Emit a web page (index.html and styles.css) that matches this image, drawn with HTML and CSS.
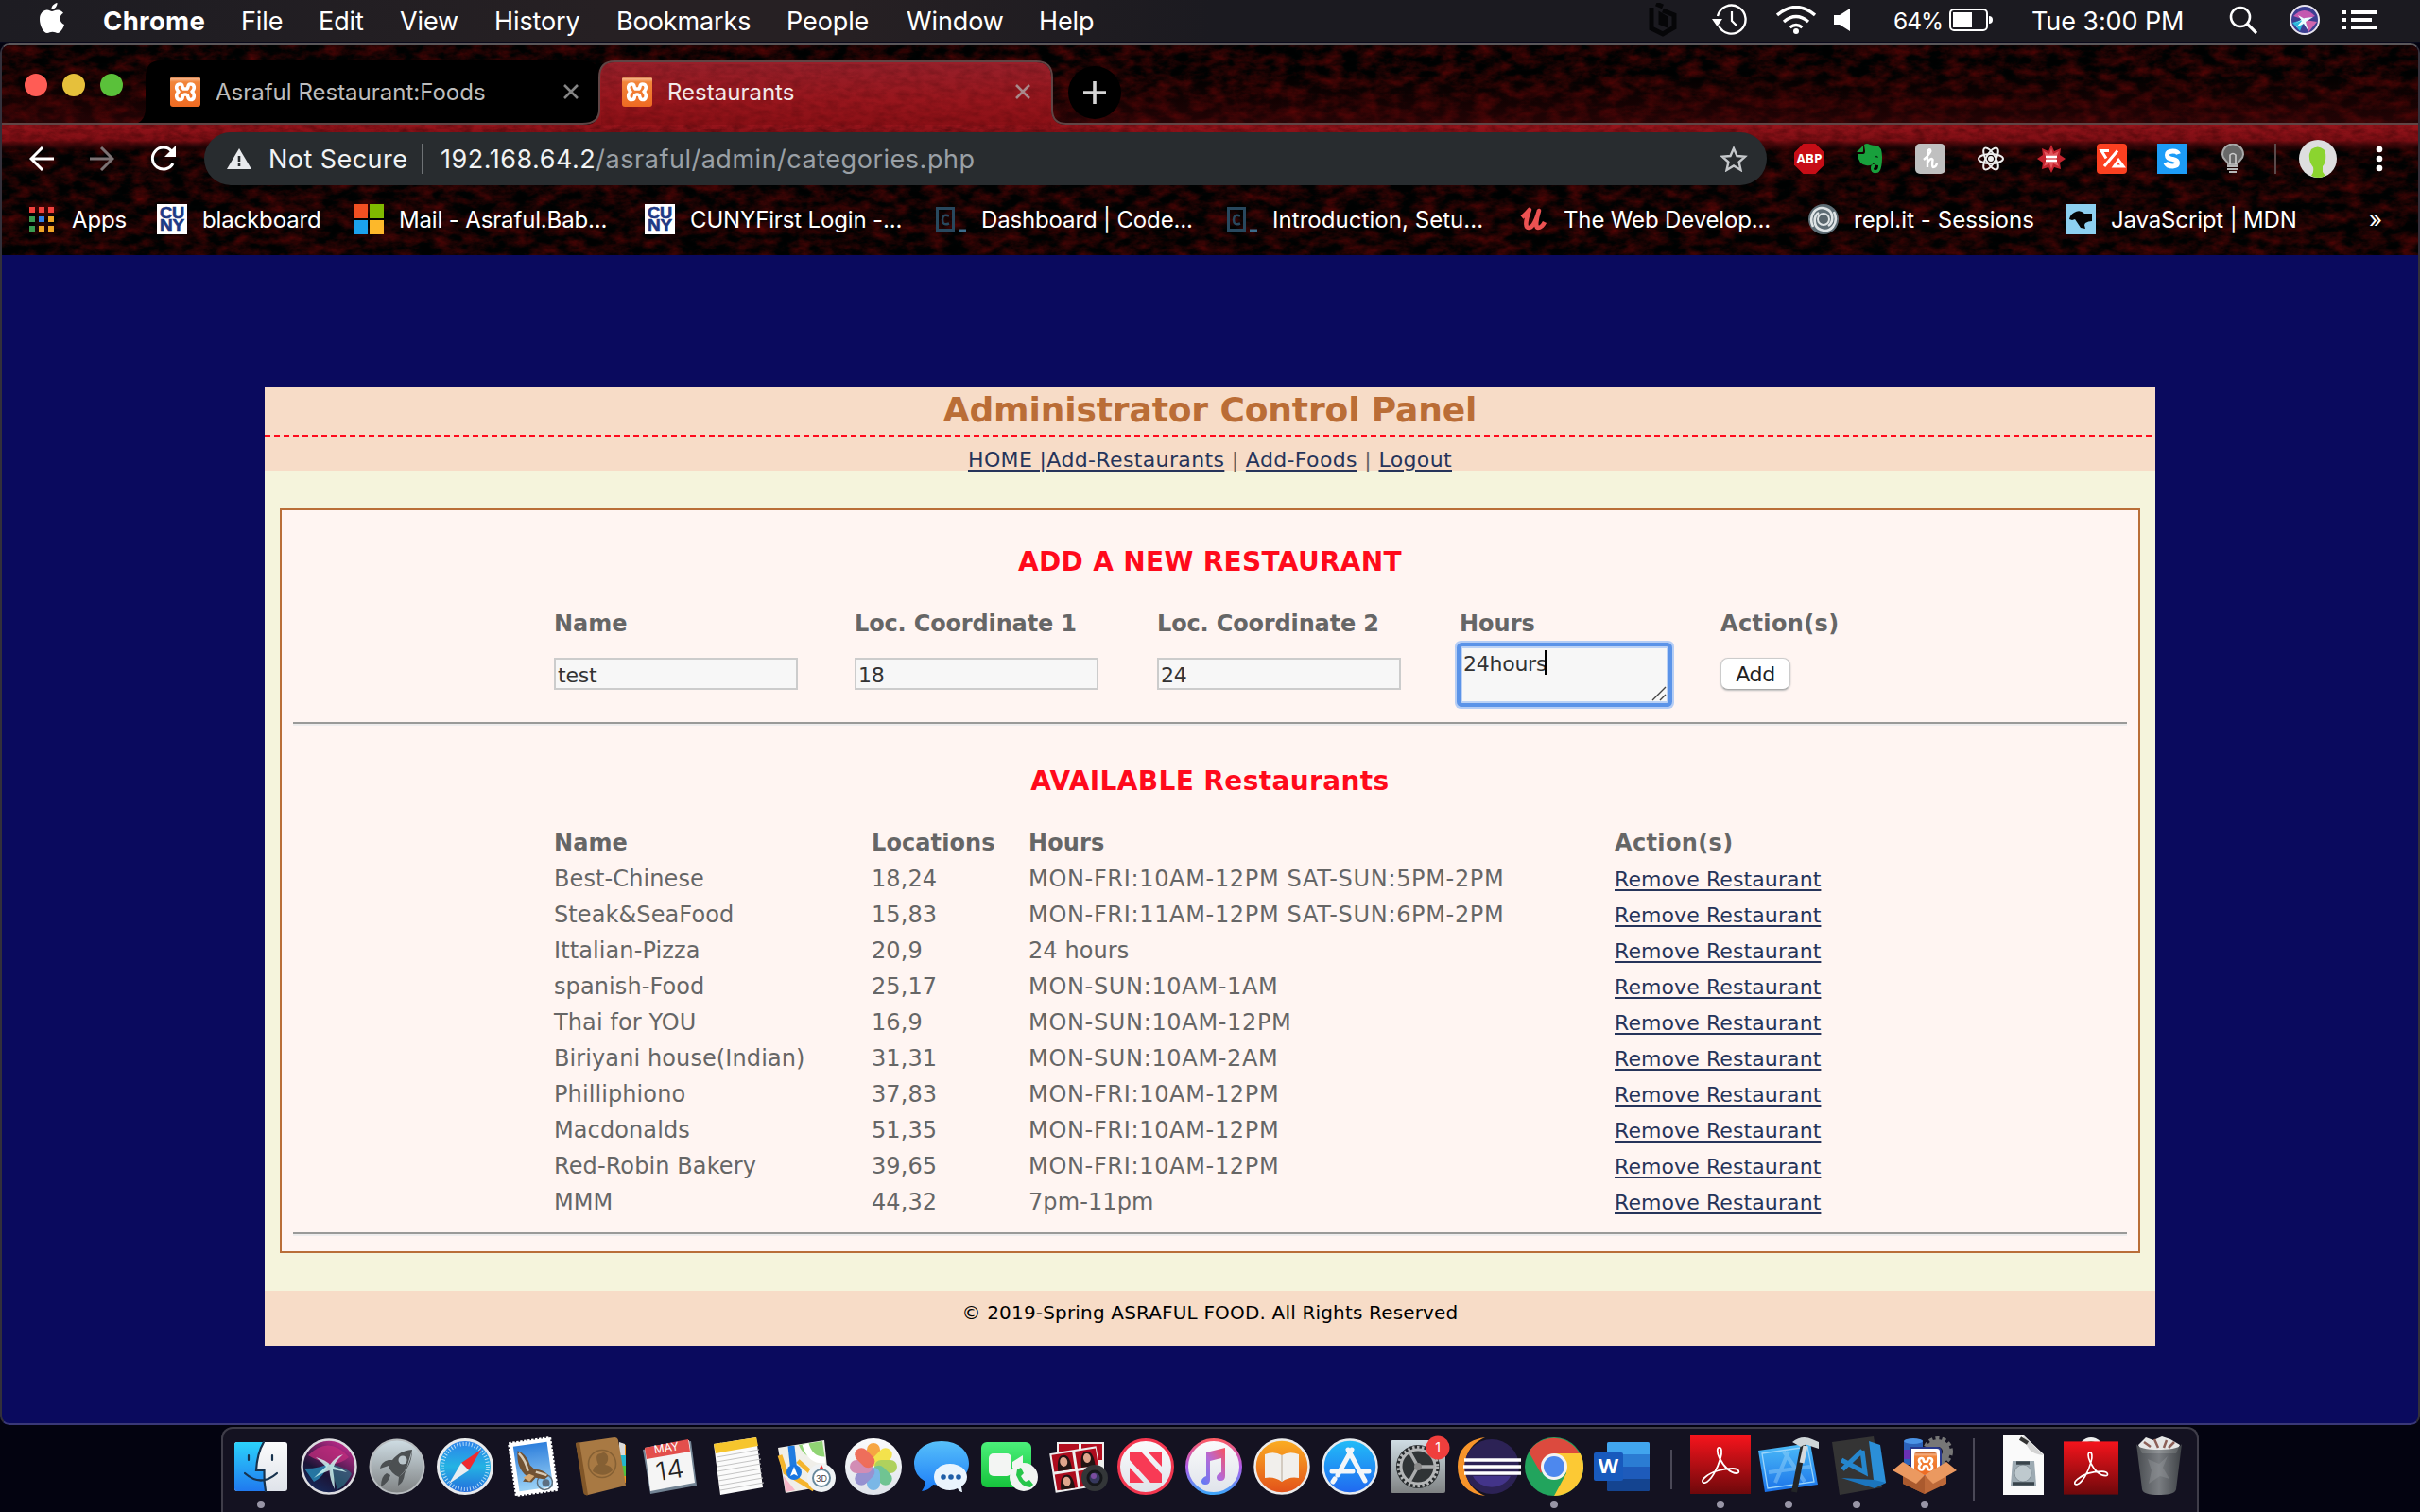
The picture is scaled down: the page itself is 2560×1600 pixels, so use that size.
FILE: index.html
```html
<!DOCTYPE html>
<html lang="en">
<head>
<meta charset="utf-8">
<title>Restaurants</title>
<link rel="stylesheet" href="styles.css">
</head>
<body>
<svg class="defs" width="0" height="0">
  <defs>
    <linearGradient id="gOrange" x1="0" y1="0" x2="0" y2="1"><stop offset="0" stop-color="#b8561c"/><stop offset=".08" stop-color="#f7b184"/><stop offset=".18" stop-color="#f2863a"/><stop offset="1" stop-color="#ee6a22"/></linearGradient>
    <linearGradient id="gSiriBg" x1="0" y1="1" x2=".6" y2="0"><stop offset="0" stop-color="#14336b"/><stop offset=".45" stop-color="#1b1436"/><stop offset="1" stop-color="#b52a86"/></linearGradient>
    <linearGradient id="gFinder" x1="0" y1="0" x2="0" y2="1"><stop offset="0" stop-color="#2bd2fb"/><stop offset="1" stop-color="#2079ef"/></linearGradient>
    <linearGradient id="gWhite" x1="0" y1="0" x2="0" y2="1"><stop offset="0" stop-color="#fbfbfc"/><stop offset="1" stop-color="#dfe3ea"/></linearGradient>
    <linearGradient id="gSilver" x1="0" y1="0" x2="0" y2="1"><stop offset="0" stop-color="#cfdde4"/><stop offset="1" stop-color="#7f8283"/></linearGradient>
    <linearGradient id="gSafari" x1="0" y1="0" x2="0" y2="1"><stop offset="0" stop-color="#2c7fea"/><stop offset=".5" stop-color="#24b3e3"/><stop offset="1" stop-color="#2468dc"/></linearGradient>
    <linearGradient id="gSky" x1="0" y1="0" x2="0" y2="1"><stop offset="0" stop-color="#2e7fdc"/><stop offset="1" stop-color="#9cd2f5"/></linearGradient>
    <linearGradient id="gBlue" x1="0" y1="0" x2="0" y2="1"><stop offset="0" stop-color="#57c0fa"/><stop offset="1" stop-color="#1c7cf7"/></linearGradient>
    <linearGradient id="gStore" x1="0" y1="0" x2="0" y2="1"><stop offset="0" stop-color="#22bdf8"/><stop offset="1" stop-color="#2067f0"/></linearGradient>
    <linearGradient id="gGreen" x1="0" y1="0" x2="0" y2="1"><stop offset="0" stop-color="#4bf07a"/><stop offset="1" stop-color="#16c33c"/></linearGradient>
    <linearGradient id="gBook" x1="0" y1="0" x2="0" y2="1"><stop offset="0" stop-color="#fbae22"/><stop offset="1" stop-color="#e2501a"/></linearGradient>
    <linearGradient id="gTunes" x1="0" y1="0" x2="0" y2="1"><stop offset="0" stop-color="#fb5b64"/><stop offset=".5" stop-color="#b05be8"/><stop offset="1" stop-color="#3fa5fb"/></linearGradient>
    <linearGradient id="gNote" x1="1" y1="0" x2="0" y2="1"><stop offset="0" stop-color="#f9525e"/><stop offset=".5" stop-color="#b46ad8"/><stop offset="1" stop-color="#5a7cf8"/></linearGradient>
    <linearGradient id="gRed" x1="0" y1="0" x2="0" y2="1"><stop offset="0" stop-color="#f5141c"/><stop offset="1" stop-color="#6e080b"/></linearGradient>
    <linearGradient id="gXcode" x1="0" y1="0" x2="0" y2="1"><stop offset="0" stop-color="#4cbcf7"/><stop offset="1" stop-color="#1a72ea"/></linearGradient>
    <linearGradient id="gTrash" x1="0" y1="0" x2="1" y2="0"><stop offset="0" stop-color="#4f5356"/><stop offset=".5" stop-color="#85898c"/><stop offset="1" stop-color="#43474a"/></linearGradient>
    <filter id="fur" x="0" y="0" width="100%" height="100%" color-interpolation-filters="sRGB">
      <feTurbulence type="fractalNoise" baseFrequency="0.05 0.09" numOctaves="5" seed="8"/>
      <feColorMatrix values="0.55 0 0 0 -0.19  0.02 0 0 0 0  0.02 0 0 0 0  0 0 0 0 1"/>
    </filter>
    <filter id="shade" x="0" y="0" width="100%" height="100%" color-interpolation-filters="sRGB">
      <feTurbulence type="fractalNoise" baseFrequency="0.08 0.16" numOctaves="5" seed="3"/>
      <feColorMatrix values="0 0 0 0 0.12  0 0 0 0 0  0 0 0 0 0  1.5 0 0 0 -0.5"/>
    </filter>
    <linearGradient id="gStrip" x1="0" y1="0" x2="0" y2="1"><stop offset="0" stop-color="#96141b"/><stop offset=".6" stop-color="#7d0e14"/><stop offset=".85" stop-color="#3d070a" stop-opacity=".5"/><stop offset="1" stop-color="#200" stop-opacity="0"/></linearGradient>
    <linearGradient id="gTab" x1="0" y1="0" x2="0" y2="1"><stop offset="0" stop-color="#96202a"/><stop offset=".6" stop-color="#98161d"/><stop offset="1" stop-color="#8a1016"/></linearGradient>
    <linearGradient id="gGlow" x1="0" y1="0" x2="0" y2="1"><stop offset="0" stop-color="#500" stop-opacity="0"/><stop offset="1" stop-color="#5a060a" stop-opacity=".4"/></linearGradient>
    <symbol id="xampp" viewBox="0 0 32 32"><rect width="32" height="32" rx="3" fill="url(#gOrange)"/><path d="M10.500 8C6 8 5.500 13 9 16C5.500 19 6 24.500 10.500 24.500C14.500 24.500 12.500 20.500 14 19.500Q16 18.500 18 19.500C19.500 20.500 18 24.500 21.500 24.500C26 24.500 26.500 19 23 16C26.500 13 26 8 21.500 8C18 8 19.500 12 18 13H14C12.500 12 14 8 10.500 8Z" fill="none" stroke="#fff" stroke-width="3.600" stroke-linejoin="round"/></symbol>
    <symbol id="cuny" viewBox="0 0 32 32"><rect width="32" height="32" fill="#fff"/><g font-family="Liberation Sans" font-weight="bold" font-size="17" fill="#1e3a86" stroke="#1e3a86" stroke-width=".6"><text x="3" y="15" textLength="26" lengthAdjust="spacingAndGlyphs">CU</text><text x="3" y="28" textLength="26" lengthAdjust="spacingAndGlyphs">NY</text></g></symbol>
    <symbol id="codec" viewBox="0 0 32 32"><path d="M1.500 4.500h17v23h-17z" fill="none" stroke="#28485e" stroke-width="3"/><path d="M24 28h8" stroke="#3d6d8c" stroke-width="3"/><path d="M14 12.500c-5-2-7 0-7 4s2 6 7 4" fill="none" stroke="#28485e" stroke-width="2.500"/></symbol>
    <symbol id="acro" viewBox="0 0 64 62"><rect width="64" height="62" fill="url(#gRed)"/><path d="M31 13c-3-1-3 5 0 11c5 10 12 16 18 16c4 0 3-5-4-5c-10 0-22 3-29 9c-5 4-3 7 0 6c6-2 13-15 16-26c2-7 1-11-1-11z" fill="none" stroke="#fff" stroke-width="1.800"/></symbol>
  </defs>
</svg>

<header class="menubar">
  <svg class="apple" viewBox="0 0 26 32"><path d="M18.500 0c.3 3-2.500 7-6 7C12 4 15 .5 18.500 0zM13 9c1.500 0 3-1.500 6-1.500c2.500 0 4.700 1.300 6 3.300c-5 3-4.300 10 1 12.200c-1 3.500-4 9-7 9c-2 0-3-1.200-5.500-1.200S10 32 8 32C4 32 0 24 0 17.500C0 11 4 7.600 7.800 7.600C10 7.600 11.500 9 13 9z" fill="#fff"/></svg>
  <b>Chrome</b><span>File</span><span>Edit</span><span>View</span><span>History</span><span>Bookmarks</span><span>People</span><span>Window</span><span>Help</span>
  <svg width="34" height="36" viewBox="0 0 34 36"><path d="M5 5v22l12 6 12-7V13l-12-5M10 1l7 3M15 13l5 3v7l-5-2z" fill="none" stroke="#060608" stroke-width="5"/></svg>
  <svg width="38" height="34" viewBox="0 0 38 34"><path d="M7 23A15 15 0 1 0 6 13" fill="none" stroke="#fff" stroke-width="2.400"/><path d="M0 16h11l-5.500 8z" fill="#fff"/><path d="M21 8v10l5 5" fill="none" stroke="#fff" stroke-width="2.200"/></svg>
  <svg width="42" height="30" viewBox="0 0 42 30"><g fill="none" stroke="#fff" stroke-width="3.400"><path d="M1 10q20-17 40 0M8 17q13-11 26 0M14.500 23q6.500-5 13 0"/></g><circle cx="21" cy="27" r="3" fill="#fff"/></svg>
  <svg width="17" height="24" viewBox="0 0 17 24"><path d="M0 7h6l11-7v24L6 17H0z" fill="#fff"/></svg>
  <span class="pct">64%</span>
  <svg width="46" height="24" viewBox="0 0 46 24"><rect x="1" y="1" width="39" height="22" rx="4" fill="none" stroke="#fff" stroke-width="2"/><rect x="4" y="4" width="20" height="16" fill="#fff"/><path d="M42 8q4 0 4 4t-4 4z" fill="#fff"/></svg>
  <span>Tue 3:00 PM</span>
  <svg width="30" height="30" viewBox="0 0 30 30"><circle cx="12" cy="12" r="10" fill="none" stroke="#fff" stroke-width="2.600"/><path d="M19 19l10 10" stroke="#fff" stroke-width="3.200"/></svg>
  <svg width="32" height="32" viewBox="0 0 32 32"><circle cx="16" cy="16" r="15" fill="#3d3f92" stroke="#e8e4ee" stroke-width="2"/><path d="M4 12Q16 0 27 12L16 16z" fill="#c45ab0"/><path d="M3 19L16 15L11 28z" fill="#28b8dc"/><path d="M16 16L29 18L20 29z" fill="#d066ae"/><path d="M5 20l11-6 9-1-8 5 3 10-5-8-8 4 6-7-4-6 7 4z" fill="#eaffff"/></svg>
  <svg width="38" height="20" viewBox="0 0 38 20"><path d="M0 2h4M9 2h28M0 10h4M9 10h22M0 18h4M9 18h28" stroke="#fff" stroke-width="4"/></svg>
</header>

<section class="window">
  <div class="chrome">
    <svg class="texture" width="2560" height="222" viewBox="0 0 2560 222">
      <rect width="2560" height="222" fill="#0a0000"/>
      <rect width="2560" height="222" filter="url(#fur)"/>
      <rect y="30" width="2560" height="52" fill="url(#gGlow)"/>
      <path d="M0 84H2560V112H0Z" fill="url(#gStrip)"/>
      <rect x="0" y="84" width="2560" height="28" filter="url(#shade)" opacity=".5"/>
      <path d="M620 84Q634 84 634 68V34Q634 18 650 18H1096Q1112 18 1112 34V68Q1112 84 1128 84Z" fill="url(#gTab)"/>
      <rect x="636" y="20" width="476" height="64" filter="url(#shade)" opacity=".25"/>
      <path d="M136 84Q154 84 154 66V34Q154 16 170 16H616Q634 16 634 34V66Q634 82 620 84Z" fill="#000"/>
      <path d="M0 83H616Q634 83 634 68V34Q634 17 650 17H1096Q1113 17 1113 34V68Q1113 83 1128 83H2560" fill="none" stroke="#5f4545" stroke-width="2"/>
    </svg>
    <div class="tabs">
      <div class="lights"><i></i><i></i><i></i></div>
      <div class="tab"><svg width="32" height="32"><use href="#xampp"/></svg><span>Asraful Restaurant:Foods</span><svg width="16" height="16" viewBox="0 0 16 16"><path d="M1 1l14 14M15 1L1 15" stroke="#858585" stroke-width="2.600"/></svg></div>
      <div class="tab active"><svg width="32" height="32"><use href="#xampp"/></svg><span>Restaurants</span><svg width="16" height="16" viewBox="0 0 16 16"><path d="M1 1l14 14M15 1L1 15" stroke="#a8898b" stroke-width="2.600"/></svg></div>
      <div class="newtab"><svg width="24" height="24" viewBox="0 0 24 24"><path d="M12 0v24M0 12h24" stroke="#d5d5d5" stroke-width="3.600"/></svg></div>
    </div>
    <div class="toolbar">
      <svg width="26" height="26" viewBox="0 0 26 26"><path d="M14 1L2 13l12 12M2 13h24" fill="none" stroke="#fff" stroke-width="3"/></svg>
      <svg width="26" height="26" viewBox="0 0 26 26"><path d="M12 1l12 12-12 12M24 13H0" fill="none" stroke="#7c7374" stroke-width="3"/></svg>
      <svg width="28" height="28" viewBox="0 0 28 28"><path d="M24 19A11.500 11.500 0 1 1 22.500 6" fill="none" stroke="#fff" stroke-width="3"/><path d="M27 0v12H15z" fill="#fff"/></svg>
      <div class="omnibox">
        <svg width="26" height="22" viewBox="0 0 26 22"><path d="M13 0l13 22H0z" fill="#e8eaed"/><path d="M13 8v6M13 16v3" stroke="#282c2f" stroke-width="2.600"/></svg>
        <span class="secure">Not Secure</span><i></i><span class="url">192.168.64.2<em>/asraful/admin/categories.php</em></span>
        <svg width="30" height="28" viewBox="0 0 30 28"><path d="M15 3l3.500 8 8.500.8-6.400 5.700 1.900 8.500L15 21.500 7.500 26l1.900-8.500L3 11.800l8.500-.8z" fill="none" stroke="#c5c8cb" stroke-width="2.400"/></svg>
      </div>
      <div class="exts">
        <svg viewBox="0 0 32 32"><path d="M9.500 0h13L32 9.500v13L22.500 32h-13L0 22.500v-13z" fill="#c70d16"/><text x="2.500" y="21" font-family="Open Sans" font-weight="bold" font-size="14.500" fill="#fff" textLength="27" lengthAdjust="spacingAndGlyphs">ABP</text></svg>
        <svg viewBox="0 0 32 32"><path d="M2 9L9 2v6q0 1-1 1zM10 1q3-2 6 0q3 1 7 1q6 1 6 12q0 17-6 17q-6 1-6-5q0-5 5-4v3q-2 0-2 2q0 1 2 1q3 0 3-5q-4 0-5-3q-2 4-8 3q-8-1-9-12h6q2 0 2-3z" fill="#18a03c"/><path d="M21 14q3-3 4 1z" fill="#0a3416"/></svg>
        <svg viewBox="0 0 32 32"><rect width="32" height="32" rx="5" fill="#c0c0c0"/><path d="M9 17q9-8 7-10.500q-3-2-3 8V25M13 20q4-6 5.500-3q-1 8 .5 8q3 0 4-4" fill="none" stroke="#fff" stroke-width="2.400"/></svg>
        <svg viewBox="0 0 32 32"><g fill="none" stroke="#eee" stroke-width="2"><ellipse cx="16" cy="16" rx="13" ry="5"/><ellipse cx="16" cy="16" rx="13" ry="5" transform="rotate(60 16 16)"/><ellipse cx="16" cy="16" rx="13" ry="5" transform="rotate(120 16 16)"/></g><circle cx="16" cy="16" r="3" fill="#eee"/></svg>
        <svg viewBox="0 0 32 32"><path d="M16 1l3 7 7-3-1 7 6 4-6 4 1 7-7-2-3 6-3-6-7 2 1-7-6-4 6-4-1-7 7 3z" fill="#c4232e"/><path d="M16 5l2 6 6-3-3 8 3 8-6-3-2 6-2-6-6 3 3-8-3-8 6 3z" fill="#e2555c"/><path d="M10 14h12M10 18h12" stroke="#fff" stroke-width="2.400"/></svg>
        <svg viewBox="0 0 32 32"><rect width="32" height="32" rx="4" fill="#fc4020"/><path d="M13 7.500H5l5 8M8 24L22 7.500M22 16l6 8H18.500l3.500-5" fill="none" stroke="#fff" stroke-width="3"/></svg>
        <svg viewBox="0 0 32 32"><rect width="32" height="32" fill="#1c9cf7"/><path d="M22.500 11q-1-3-6-3q-6 0-6 4t6 4.500q5 1 5 4t-5 3.500q-6 0-7.500-4" fill="none" stroke="#fff" stroke-width="5"/></svg>
        <svg viewBox="0 0 32 32"><path d="M11 22C11 18 5 17 5 11.500a11 11 0 0 1 22 0C27 17 21 18 21 22z" fill="#686868" stroke="#a8a8a8" stroke-width="2"/><path d="M13 22V12q3-3 6 0v10" fill="none" stroke="#ccc" stroke-width="1.600"/><path d="M10 24h12M10 27h12M12 30h8" stroke="#b8b8b8" stroke-width="2.200"/></svg>
      </div>
      <i class="rule"></i>
      <svg width="40" height="40" viewBox="0 0 40 40"><circle cx="20" cy="20" r="20" fill="#dededf"/><path d="M13 10q7-5 13 0q3 2 2 12q-1 4-3 6v6l3 4q-8 4-15 0q3-3 2-9q-5-6-4-14z" fill="#8bd42f"/></svg>
      <svg width="8" height="28" viewBox="0 0 8 28"><g fill="#fff"><circle cx="4" cy="4" r="3.300"/><circle cx="4" cy="14" r="3.300"/><circle cx="4" cy="24" r="3.300"/></g></svg>
    </div>
    <div class="bookmarks">
      <svg width="26" height="28" viewBox="0 0 26 28"><path d="M0 4h6M10 4h6M20 4h6" stroke="#f0413c" stroke-width="6"/><path d="M0 14h6M0 24h6" stroke="#3a9c50" stroke-width="6"/><path d="M10 14h6" stroke="#2f80ea" stroke-width="6"/><path d="M20 14h6M10 24h6M20 24h6" stroke="#f0a526" stroke-width="6"/></svg><span>Apps</span>
      <svg><use href="#cuny"/></svg><span>blackboard</span>
      <svg viewBox="0 0 32 32"><path fill="#f25022" d="M0 0h15v15H0z"/><path fill="#7fba00" d="M17 0h15v15H17z"/><path fill="#1ba3ee" d="M0 17h15v15H0z"/><path fill="#fdb82a" d="M17 17h15v15H17z"/></svg><span>Mail - Asraful.Bab...</span>
      <svg><use href="#cuny"/></svg><span>CUNYFirst Login -...</span>
      <svg><use href="#codec"/></svg><span>Dashboard | Code...</span>
      <svg><use href="#codec"/></svg><span class="intro">Introduction, Setu...</span>
      <svg viewBox="0 0 32 32"><path d="M3 14Q8 10 11 6C8 14 5 25 10 25C15 25 19 14 21 7C18 16 17 25 20 25Q24 25 27 19" fill="none" stroke="#ec5252" stroke-width="4.600" stroke-linejoin="round"/></svg><span>The Web Develop...</span>
      <svg viewBox="0 0 32 32"><circle cx="16" cy="16" r="16" fill="#5e6d75"/><g fill="none" stroke="#dfe4e6" stroke-width="2.600"><path d="M5 24C-1 11 9 1 19 5c8 3 8 14 2 18M27 8c6 13-4 23-14 19C5 24 5 13 11 9"/></g><circle cx="16" cy="16" r="6" fill="#59666d" stroke="#dfe4e6" stroke-width="2"/></svg><span class="intro">repl.it - Sessions</span>
      <svg viewBox="0 0 32 32"><path fill="#8dd0f0" d="M0 0h32v32H0z"/><path d="M4 16q1-5 5-7q6-4 11 1l8 0v8q-4 0-7 2l-1 2 1 4-5-1-4-6-2-3-3 1z" fill="#050505"/></svg><span>JavaScript | MDN</span>
      <span class="more">»</span>
    </div>
  </div>

  <main class="page">
    <div class="container">
      <div class="head">
        <h1>Administrator Control Panel</h1>
        <nav><a>HOME |Add-Restaurants</a> | <a>Add-Foods</a> | <a>Logout</a></nav>
      </div>
      <div class="panel">
        <h2>ADD A NEW RESTAURANT</h2>
        <form class="add">
          <label>Name</label><label class="loc">Loc. Coordinate 1</label><label class="loc">Loc. Coordinate 2</label><label>Hours</label><label class="act">Action(s)</label>
          <input value="test"><input value="18"><input value="24">
          <div class="area">24hours<i></i><svg width="16" height="16" viewBox="0 0 16 16"><path d="M1 15L15 1M9 15l6-6" stroke="#444" stroke-width="1.400"/></svg></div>
          <button type="button">Add</button>
        </form>
        <hr>
        <h2 class="second">AVAILABLE Restaurants</h2>
        <div class="list">
          <b>Name</b><b>Locations</b><b>Hours</b><b class="act">Action(s)</b>
          <span>Best-Chinese</span><span>18,24</span><span class="hrs">MON-FRI:10AM-12PM SAT-SUN:5PM-2PM</span><a>Remove Restaurant</a>
          <span>Steak&amp;SeaFood</span><span>15,83</span><span class="hrs">MON-FRI:11AM-12PM SAT-SUN:6PM-2PM</span><a>Remove Restaurant</a>
          <span>Ittalian-Pizza</span><span>20,9</span><span>24 hours</span><a>Remove Restaurant</a>
          <span>spanish-Food</span><span>25,17</span><span class="hrs">MON-SUN:10AM-1AM</span><a>Remove Restaurant</a>
          <span>Thai for YOU</span><span>16,9</span><span class="hrs">MON-SUN:10AM-12PM</span><a>Remove Restaurant</a>
          <span>Biriyani house(Indian)</span><span>31,31</span><span class="hrs">MON-SUN:10AM-2AM</span><a>Remove Restaurant</a>
          <span>Philliphiono</span><span>37,83</span><span class="hrs">MON-FRI:10AM-12PM</span><a>Remove Restaurant</a>
          <span>Macdonalds</span><span>51,35</span><span class="hrs">MON-FRI:10AM-12PM</span><a>Remove Restaurant</a>
          <span>Red-Robin Bakery</span><span>39,65</span><span class="hrs">MON-FRI:10AM-12PM</span><a>Remove Restaurant</a>
          <span>MMM</span><span>44,32</span><span>7pm-11pm</span><a>Remove Restaurant</a>
        </div>
        <hr>
      </div>
      <footer>© 2019-Spring ASRAFUL FOOD. All Rights Reserved</footer>
    </div>
  </main>
</section>

<div class="dock">
  <div class="app on"><svg viewBox="0 0 72 72"><rect x="8" y="10" width="56" height="52" rx="3" fill="url(#gWhite)"/><path d="M11 10H39Q32 22 31 40H39.500Q39 52 41 62H11Q8 62 8 59V13Q8 10 11 10Z" fill="url(#gFinder)"/><path d="M39 10Q32 22 31 40H39.500Q39 52 41 62M19 43Q36 58 53 43M23 24v5M48 24v5" fill="none" stroke="#17324d" stroke-width="2.200" stroke-linecap="round"/></svg></div>
  <div class="app"><svg viewBox="0 0 72 72"><circle cx="36" cy="36" r="28.500" fill="url(#gSiriBg)" stroke="#dcdce0" stroke-width="2.500"/><path d="M14 24Q36 2 57 26Q48 34 36 33Q24 30 14 24z" fill="#c22c7c" opacity=".75"/><path d="M10 38Q28 38 36 32Q30 48 20 52z" fill="#2b9ccc" opacity=".7"/><path d="M36 33Q58 38 60 44Q52 58 45 60z" fill="#2f6f85" opacity=".7"/><path d="M22 26Q33 29 37 34Q42 26 51 23Q42 31 41 36Q49 38 55 42Q46 40 40 39Q42 50 42 60Q37 50 36.500 40Q28 43 20 48Q28 40 33 36Q28 31 22 26z" fill="#d5fff8" opacity=".8"/></svg></div>
  <div class="app"><svg viewBox="0 0 72 72"><circle cx="36" cy="36" r="28.500" fill="url(#gSilver)" stroke="#b9bdc0" stroke-width="2"/><path d="M52 18q-16 1-25 17l-9 3q1-7 9-9h6M52 18q0 18-14 29l-1 9q6-3 7-12M27 35q2 8 11 12q12-10 14-29q-17 2-25 17zM25 43q-6 3-6 14q8-4 10-12z" fill="#4c5052"/><circle cx="42" cy="29" r="4.500" fill="#b9c4c9"/></svg></div>
  <div class="app"><svg viewBox="0 0 72 72"><circle cx="36" cy="36" r="28.500" fill="url(#gSafari)" stroke="#e8eaec" stroke-width="3"/><circle cx="36" cy="36" r="24" fill="none" stroke="#d8f0fb" stroke-width="4" stroke-dasharray="1 2.140" opacity=".8"/><path d="M53 18L40 40 32 32z" fill="#ee2b30"/><path d="M19 54L32 32 40 40z" fill="#e9eef1"/></svg></div>
  <div class="app"><svg viewBox="0 0 72 72"><g transform="rotate(-8 36 36)"><rect x="14" y="8" width="44" height="56" fill="#fff" stroke="#fff" stroke-width="2.500" stroke-dasharray="2.500 1.500"/><rect x="18" y="12" width="36" height="48" fill="url(#gSky)"/><circle cx="46" cy="54" r="8" fill="none" stroke="#60707c" stroke-width="1.500"/><circle cx="47" cy="55" r="4" fill="#5d6f81"/><path d="M22 17q9 4 11 17l4 5q9 1 14 9l-5 3-9-3-5 4-9-2 5-5q-10-10-6-28z" fill="#715233"/><path d="M23 20q6 8 7 20M38 42l11 5" stroke="#d8cbb7" stroke-width="2.500" fill="none"/><path d="M24 46l7-3 5 3-6 5z" fill="#d5a873"/></g></svg></div>
  <div class="app"><svg viewBox="0 0 72 72"><path d="M57 11l5 2v40l-5 2z" fill="#f0951c"/><path d="M55 10l6 2v12h-6z" fill="#dadada"/><path d="M56 24h6v11h-6z" fill="#23b6ce"/><path d="M56 35h6v11h-6z" fill="#54c23c"/><path d="M9 11L50 5q3 0 4 3L62 56 22 66q-3 1-4-3z" fill="#a87943"/><path d="M9 11l4-1 9 56q-4 1-5-3z" fill="#815628"/><circle cx="37" cy="33" r="14.500" fill="none" stroke="#856034" stroke-width="1.600"/><path d="M27 41q1-6 6-7q-5-12 3-12q4-3 7 3q1 6-3 9q7 1 8 6q-9 9-21 1z" fill="#856034"/></svg></div>
  <div class="app"><svg viewBox="0 0 72 72"><path d="M8 18l51-9 6 47-49 9z" fill="#738494"/><path d="M10 16l47-8 6 45-47 9z" fill="#f5f5f5"/><path d="M10 16L56 7l2 13-46 8z" fill="#e34f4c"/><g transform="rotate(-9 36 36)"><text x="36" y="20" text-anchor="middle" class="mon">MAY</text><text x="36" y="49" text-anchor="middle" class="day" textLength="30" lengthAdjust="spacingAndGlyphs">14</text></g></svg></div>
  <div class="app"><svg viewBox="0 0 72 72"><path d="M11 12l45-7 7 53-45 8z" fill="#fbfbfb"/><path d="M11 12l45-7 2 9-45 8z" fill="#f6c52d"/><path d="M14 26l45-8M14 31l46-8M15 36l46-8M15 41l46-8M16 46l46-8M16 51l46-8M17 56l46-8M18 61l46-8" stroke="#c4c4c4" stroke-width="1"/></svg></div>
  <div class="app"><svg viewBox="0 0 72 72"><path d="M7 16l49-8 5 48-46 8z" fill="#f0efe9"/><path d="M29 13l25-4 3 20q-22 0-28-16z" fill="#90d474"/><path d="M36 12q5 18 21 17" stroke="#fff" stroke-width="7" fill="none"/><path d="M9 24l6 18 30 18M28 30l20 18" stroke="#f5b52c" stroke-width="5" fill="none"/><path d="M13 46l12 15-10 2z" fill="#f7b7c9"/><path d="M21 14l3 28" stroke="#1f7be0" stroke-width="7"/><circle cx="24" cy="42" r="8" fill="#1976e2"/><path d="M24 36l4 10-4-2-4 2z" fill="#fff"/><circle cx="53" cy="48" r="15" fill="#eff2f4"/><circle cx="53" cy="48" r="9" fill="#fff" stroke="#67889c" stroke-width="2"/><text x="53" y="51.500" text-anchor="middle" class="threed">3D</text><path d="M51 38l2-4 2 4z" fill="#e33"/></svg></div>
  <div class="app"><svg viewBox="0 0 72 72"><circle cx="36" cy="36" r="30" fill="url(#gWhite)"/><g opacity=".88"><rect x="29" y="11" width="14" height="24" rx="7" fill="#f79b2a"/><rect x="29" y="11" width="14" height="24" rx="7" fill="#f4e035" transform="rotate(45 36 36)"/><rect x="29" y="11" width="14" height="24" rx="7" fill="#a7cd49" transform="rotate(90 36 36)"/><rect x="29" y="11" width="14" height="24" rx="7" fill="#60bf86" transform="rotate(135 36 36)"/><rect x="29" y="11" width="14" height="24" rx="7" fill="#6cb1e6" transform="rotate(180 36 36)"/><rect x="29" y="11" width="14" height="24" rx="7" fill="#8c86cc" transform="rotate(225 36 36)"/><rect x="29" y="11" width="14" height="24" rx="7" fill="#cf80ad" transform="rotate(270 36 36)"/><rect x="29" y="11" width="14" height="24" rx="7" fill="#ee5c46" transform="rotate(315 36 36)"/></g></svg></div>
  <div class="app"><svg viewBox="0 0 72 72"><path d="M36 9C18 9 7 20 7 33q0 12 12 19q-1 6-4 10q8-1 12-7q22 3 33-9Q65 40 65 33C65 20 54 9 36 9z" fill="url(#gBlue)"/><path d="M45 33c-11 0-17 7-17 14s6 14 17 14q4 0 8-2q2 4 5 4l-1-6q6-4 6-10c0-7-7-14-18-14z" fill="#eaf4fd"/><g fill="#1f5ea8"><circle cx="38" cy="47" r="2.800"/><circle cx="46" cy="47" r="2.800"/><circle cx="54" cy="47" r="2.800"/></g></svg></div>
  <div class="app"><svg viewBox="0 0 72 72"><rect x="6" y="10" width="53" height="48" rx="6" fill="url(#gGreen)"/><rect x="14" y="22" width="24" height="24" rx="5" fill="#f3f5f3"/><path d="M39 31l11-7v20l-11-7z" fill="#f3f5f3"/><circle cx="51" cy="47" r="15" fill="#f2f5f2"/><path d="M44 39l4-2 3 6-3 3q2 4 5 6l4-2 4 5-3 3q-10 0-15-13z" fill="#27c64a"/></svg></div>
  <div class="app"><svg viewBox="0 0 72 72"><path d="M14 10h50v44H14z" fill="#eee"/><path d="M16 12h21v17H16zM40 12h22v17H40z" fill="#b30d1f"/><g transform="rotate(-9 34 38)"><path d="M9 18h50v42H9z" fill="#eee"/><path d="M11 20h22v18H11zM36 20h22v18H36zM11 41h22v17H11zM36 41h22v17H36z" fill="#ad0c1d"/><path d="M15 38q1-17 8-16q7 0 7 16zM40 38q1-17 8-16q7 0 7 16zM15 58q1-16 8-15q7 0 7 15z" fill="#211413"/><g fill="#dfa58c"><ellipse cx="22.500" cy="29" rx="4" ry="5"/><ellipse cx="47.500" cy="29" rx="4" ry="5"/><ellipse cx="22.500" cy="50" rx="4" ry="5"/></g></g><circle cx="54" cy="48" r="14" fill="#333638"/><circle cx="54" cy="48" r="7" fill="#36385d" stroke="#15171a" stroke-width="3"/><circle cx="53" cy="46" r="3" fill="#7a4da0"/></svg></div>
  <div class="app"><svg viewBox="0 0 72 72"><circle cx="36" cy="36" r="28.500" fill="url(#gWhite)" stroke="#f3364f" stroke-width="3"/><path d="M19 20h12l22 24v9H41L19 29z" fill="#f83a55"/><path d="M38 20h15v16zM19 37v16h15z" fill="#f83a55"/></svg></div>
  <div class="app"><svg viewBox="0 0 72 72"><circle cx="36" cy="36" r="28.500" fill="url(#gWhite)" stroke="url(#gTunes)" stroke-width="3"/><path d="M28 21l20-5v30q0 5-5 5-4 0-4-3.500t5-5.500V27l-12 3v20q0 5-5 5-4 0-4-3.500t5-5.500z" fill="url(#gNote)"/></svg></div>
  <div class="app"><svg viewBox="0 0 72 72"><circle cx="36" cy="36" r="28.500" fill="url(#gBook)" stroke="#ececec" stroke-width="2.500"/><path d="M36 24q-8-5-18-1v25q10-2 18 4q8-6 18-4V23q-10-4-18 1z" fill="#f1efec"/><path d="M36 24v28" stroke="#c9bfb3" stroke-width="1.500"/></svg></div>
  <div class="app"><svg viewBox="0 0 72 72"><circle cx="36" cy="36" r="28.500" fill="url(#gStore)" stroke="#e6eaee" stroke-width="2.500"/><path d="M38 18L23 45M34 18l18 33M17 41h22M46 41h10M20 49l-2 3" stroke="#f2f6f9" stroke-width="5" stroke-linecap="round"/></svg></div>
  <div class="app"><svg viewBox="0 0 72 72"><rect x="7" y="8" width="58" height="56" rx="2" fill="url(#gSilver)"/><circle cx="36" cy="36" r="23" fill="#25292b"/><circle cx="36" cy="36" r="18" fill="#303436" stroke="#b4b6b7" stroke-width="3"/><circle cx="36" cy="36" r="20.500" fill="none" stroke="#b4b6b7" stroke-width="3.500" stroke-dasharray="2.500 2.500"/><path d="M36 36L27 20M36 36h18M36 36L27 52" stroke="#aaacad" stroke-width="3.500"/><circle cx="36" cy="36" r="4" fill="#888"/><circle cx="57" cy="16" r="12.500" fill="#f03e3d"/><text x="57" y="21" text-anchor="middle" class="badge">1</text></svg></div>
  <div class="app"><svg viewBox="0 0 72 72"><path d="M35 5Q6 9 6 36t29 31Q14 58 14 36T35 5z" fill="#f7942a"/><circle cx="42" cy="36" r="29" fill="#2c2255"/><path d="M22 46a22 20 0 0 0 40 0z" fill="#43348a"/><path d="M13 29h60M12 36h61M13 43h60" stroke="#fff" stroke-width="3.400"/></svg></div>
  <div class="app on"><svg viewBox="0 0 72 72"><circle cx="36" cy="36" r="31" fill="#22a45d"/><path d="M9.200 20.500A31 31 0 0 1 62.800 22H36L22 43z" fill="#dc4a3e"/><path d="M36 22H63.700A31 31 0 0 1 36 67L49 43z" fill="#fcc934"/><circle cx="36" cy="36" r="14" fill="#f3f3f3"/><circle cx="36" cy="36" r="11" fill="#4d88ee"/></svg></div>
  <div class="app"><svg viewBox="0 0 72 72"><rect x="20" y="10" width="45" height="52" rx="2" fill="#1e5bbb"/><path d="M20 12q0-2 2-2h41q2 0 2 2v11H20z" fill="#41a5ee"/><path d="M20 23h45v13H20z" fill="#2b7cd3"/><path d="M20 49h45v11q0 2-2 2H22q-2 0-2-2z" fill="#144490"/><rect x="6" y="21" width="31" height="30" rx="2" fill="#185abd"/><text x="21.500" y="43" text-anchor="middle" class="word">W</text></svg></div>
  <i class="short"></i>
  <div class="app on"><svg viewBox="0 0 72 72"><use href="#acro" x="4" y="3" width="64" height="62"/></svg></div>
  <div class="app on"><svg viewBox="0 0 72 72"><path d="M4 19l55-8 8 44-56 8z" fill="url(#gXcode)"/><path d="M8 22l48-7 7 37-49 7z" fill="none" stroke="#9bd5fb" stroke-width="1.300"/><path d="M36 20L22 53M31 20l22 32M15 42l44-6" stroke="#a5dbfc" stroke-width="4" opacity=".4"/><path d="M52 12L42 63" stroke="#232527" stroke-width="6"/><path d="M54 14L50 32" stroke="#d4d9dc" stroke-width="5"/><path d="M40 10q10-8 21-3l7 3v7l-9-3q-6-3-10 1z" fill="#ced5d8"/></svg></div>
  <div class="app on"><svg viewBox="0 0 72 72"><path d="M10 10l44-6 9 54-45 8z" fill="#343434"/><path d="M49 9l12 4 6 40-12 5z" fill="#2b8fd8"/><path d="M20 48l35 2 12 3-12 6z" fill="#1b75bd"/><path d="M42 19l3 23L20 29M42 19L21 39" fill="none" stroke="#2586cd" stroke-width="5"/></svg></div>
  <div class="app on"><svg viewBox="0 0 72 72"><circle cx="50" cy="20" r="9" fill="none" stroke="#777" stroke-width="8"/><circle cx="50" cy="20" r="14" fill="none" stroke="#777" stroke-width="4" stroke-dasharray="4 3"/><rect x="14" y="7" width="20" height="27" rx="4" fill="#2c62ba"/><path d="M14 18h20v10H14z" fill="#6a30b5"/><ellipse cx="24" cy="9" rx="10" ry="3" fill="#4b93e6"/><path d="M21 16h28q4 0 4 4v26H21z" fill="#fff" stroke="#28388e" stroke-width="2"/><use href="#xampp" x="25" y="20" width="24" height="26"/><path d="M13 34l23 12 23-12v20L36 65 13 54z" fill="#bd6939"/><path d="M36 46v19L13 54V34z" fill="#aa5a2e"/><path d="M13 31l23 14-9 9L2 40zM59 31L36 45l9 9 25-14z" fill="#eb9960"/></svg></div>
  <i></i>
  <div class="app"><svg viewBox="0 0 72 72"><path d="M15 3h22l21 20v43H15z" fill="#fafafa"/><path d="M36 3q3 10 7 15q4 5 15 6z" fill="#d3d3d3"/><path d="M33 6l8 5" stroke="#333" stroke-width="4"/><path d="M25 30h23l2 26H23z" fill="#9daab2"/><circle cx="36" cy="43" r="9" fill="#bec9ce" stroke="#87939a"/><path d="M29 32h14M25 54h23" stroke="#39444b" stroke-width="3.500"/></svg></div>
  <div class="app"><svg viewBox="0 0 72 72"><circle cx="36" cy="18" r="13" fill="#eee"/><circle cx="36" cy="18" r="9" fill="#2fa66a"/><use href="#acro" x="7" y="9" width="58" height="57"/></svg></div>
  <div class="app"><svg viewBox="0 0 72 72"><path d="M14 13l8-8 8 3 9-4 9 3 10 6-4 9H18z" fill="#e6e6e6"/><path d="M20 10l7 5M31 7l4 9M44 8l-3 8M52 10l-6 6" stroke="#8c5f57" stroke-width="2.500"/><path d="M12 12l6 48q1 6 18 6t18-6l6-48q-3 6-24 6t-24-6z" fill="url(#gTrash)" opacity=".9"/><path d="M24 28l12 5 9-8-5 12 7 12-10-3-12 8 3-14z" fill="#a2a6a8" opacity=".3"/></svg></div>
</div>
</body>
</html>
```
FILE: styles.css
```css
* { box-sizing: border-box; }
body { margin: 0; width: 2560px; height: 1600px; overflow: hidden; display: flex; flex-direction: column; align-items: center; background: #030310; font-family: Inter, "Liberation Sans", sans-serif; }
.defs { position: absolute; }
svg { display: block; }

.menubar { width: 2560px; height: 46px; padding: 0 0 2px 42px; display: grid; align-items: center; white-space: nowrap; color: #fff; font-size: 27px; letter-spacing: -0.1px;
  grid-template-columns: 67px 146px 82px 86px 100px 129px 180px 127px 140px 643px 69px 68px 61px 63px 59px 87px 209px 64px 56px 40px;
  background: linear-gradient(90deg, #1d1c22 0, #262023 25%, #262023 35%, #1b1a20 50%); border-bottom: 2px solid #08081a; }
.menubar b { font-size: 27.5px; letter-spacing: 0.3px; }
.menubar b, .menubar span { padding-top: 2px; }
.menubar .apple { width: 26px; height: 32px; margin-top: -4px; }
.menubar .pct { font-size: 24.5px; letter-spacing: -1px; }

.window { width: 2560px; height: 1462px; border: 2px solid #5a575a; border-left-color: #33303a; border-right-color: #33303a; border-bottom-color: #3a3878; border-radius: 10px; overflow: hidden; display: flex; flex-direction: column; background: #0a0a5e; }
.chrome { position: relative; height: 222px; flex: none; margin: 0 -2px; }
.texture { position: absolute; left: 0; top: 0; }
.tabs { position: relative; height: 84px; padding: 16px 0 2px 26px; display: flex; }
.lights { width: 130px; padding-top: 14px; display: flex; gap: 16px; }
.lights i { width: 24px; height: 24px; border-radius: 50%; background: #ff5c55; }
.lights i:nth-child(2) { background: #e6c03b; }
.lights i:nth-child(3) { background: #5ac13a; }
.tab { width: 478px; padding: 0 22px 0 24px; display: flex; align-items: center; gap: 16px; font-size: 24px; color: #bdbdbd; }
.tab span { flex: 1; white-space: nowrap; letter-spacing: 0; }
.tab.active { color: #f3e9e9; }
.newtab { width: 56px; height: 56px; margin: 6px 0 0 18px; border-radius: 50%; background: #000; display: flex; align-items: center; justify-content: center; }
.toolbar { position: relative; height: 72px; padding-left: 31px; display: grid; align-items: center; grid-template-columns: 64px 64px 57px 1682px 508px 26px 81px 10px; }
.omnibox { width: 1653px; height: 56px; padding: 0 20px 0 24px; border-radius: 28px; background: #282c2f; display: flex; align-items: center; font-size: 27px; white-space: nowrap; color: #f1f3f4; }
.omnibox .secure { width: 147px; margin-left: 18px; letter-spacing: 0.45px; }
.omnibox i { width: 2px; height: 32px; margin: 0 18px 0 15px; background: #6e7275; }
.omnibox .url { flex: 1; letter-spacing: 0.52px; }
.omnibox em { font-style: normal; color: #9aa0a6; }
.exts { display: flex; gap: 32px; }
.exts svg { width: 32px; height: 32px; }
.rule { width: 2px; height: 32px; background: #5a4a4b; }
.bookmarks { position: relative; height: 56px; padding: 0 0 0 31px; display: grid; align-items: center; white-space: nowrap; font-size: 24px; color: #fff; letter-spacing: -0.15px;
  grid-template-columns: 45px 90px 48px 160px 48px 260px 48px 260px 48px 260px 48px 261px 47px 259px 48px 224px 48px 273px 40px; }
.bookmarks svg { width: 32px; height: 32px; }
.bookmarks svg:first-child { width: 26px; height: 28px; }
.bookmarks .intro { letter-spacing: 0.05px; }

.page { flex: 1; display: flex; justify-content: center; align-items: flex-start; padding-top: 140px; font-family: "DejaVu Sans", Verdana, sans-serif; color: #666; }
.container { width: 2000px; height: 1014px; background: #f5f4dc; display: flex; flex-direction: column; }
.head { height: 88px; background: #f7dcc7; text-align: center; }
h1 { margin: 0; height: 52px; line-height: 47px; font-size: 36px; letter-spacing: -0.12px; color: #ba6d36; background: repeating-linear-gradient(90deg, #fe0b1c 0 6px, transparent 6px 10px) 0 50px / 100% 2px no-repeat; }
nav { padding-top: 13px; height: 36px; line-height: 24px; font-size: 22px; letter-spacing: 0.37px; white-space: pre; }
a { color: #26345a; text-decoration: underline; text-decoration-thickness: 2px; text-underline-offset: 3px; }
.panel { height: 788px; margin: 40px 16px; border: 2px solid #b96e38; background: #fff5f2; padding: 0 12px; }
h2 { margin: 0; height: 108px; line-height: 110px; text-align: center; font-size: 28px; letter-spacing: 0.32px; color: #ff0a1b; }
h2.second { height: 104px; padding-top: 14px; line-height: 90px; letter-spacing: 0.38px; }
hr { height: 4px; margin: 0; border: 0; background: linear-gradient(#9a9a98 50%, #eeecec 50%); }
.add { height: 116px; padding-left: 276px; display: grid; grid-template-columns: 318px 320px 320px 276px 100px; grid-template-rows: 24px 92px; }
.add label { font-size: 24px; line-height: 24px; font-weight: bold; white-space: nowrap; }
.add .loc { letter-spacing: -0.15px; }
.act { letter-spacing: 0.35px; }
.add input { width: 258px; height: 34px; margin-top: 24px; padding: 3px 2px 1px; border: 2px solid #ccc; background: #f7f7f7; font: 22px "DejaVu Sans", sans-serif; letter-spacing: -0.2px; color: #333; }
.area { width: 220px; height: 60px; margin: 12px 0 0 1px; padding: 5px 1px; position: relative; background: #f7f7f7; border: 2px solid #bcd2f5; box-shadow: 0 0 0 4px #5b93e8, 0 0 0 6px #b5cdf5; border-radius: 2px; font-size: 22px; line-height: 24px; letter-spacing: -0.25px; color: #333; }
.area i { position: absolute; left: 87px; top: 2px; width: 2px; height: 26px; background: #000; }
.area svg { position: absolute; right: 0; bottom: 0; }
.add button { width: 74px; height: 34px; margin-top: 24px; padding: 1px 0 0; border: 1px solid #ccc; border-bottom-color: #aaa; border-radius: 8px; background: #fff; box-shadow: 0 1px 2px #bbb; font: 22px/30px "DejaVu Sans", sans-serif; letter-spacing: -0.3px; color: #222; }
.list { height: 432px; padding: 1px 0 0 276px; display: grid; grid-template-columns: 336px 166px 620px 300px; grid-auto-rows: 38px; font-size: 24px; line-height: 38px; letter-spacing: 0.1px; white-space: nowrap; }
.list .hrs { letter-spacing: 0.67px; }
.list .act { letter-spacing: 0.35px; }
.list a { font-size: 22px; padding-top: 1px; }
footer { height: 58px; line-height: 46px; background: #f7dcc7; text-align: center; font-size: 20px; letter-spacing: 0.17px; color: #000; }

.dock { width: 2092px; height: 90px; margin-top: 2px; padding: 4px 4px 0; border: 2px solid #3f3d49; border-bottom-width: 0; border-radius: 12px 12px 0 0; display: flex; background: #141221; }
.app { width: 72px; height: 82px; display: flex; flex-direction: column; align-items: center; }
.app svg { width: 72px; height: 72px; flex: none; overflow: visible; }
.app.on::after { content: ""; width: 8px; height: 8px; border-radius: 50%; background: #9895a6; }
.dock > i { width: 2px; height: 66px; margin: 6px 15px 0; background: #4a4857; }
.dock > i.short { height: 42px; margin-top: 18px; }
.mon { font: 12px Inter, sans-serif; fill: #fff; }
.day { font: 300 27px Inter, sans-serif; fill: #222; }
.threed { font: 9px Inter, sans-serif; fill: #444; }
.badge { font: 14px Inter, sans-serif; fill: #fff; }
.word { font: bold 22px "Open Sans", sans-serif; fill: #fff; }
```
